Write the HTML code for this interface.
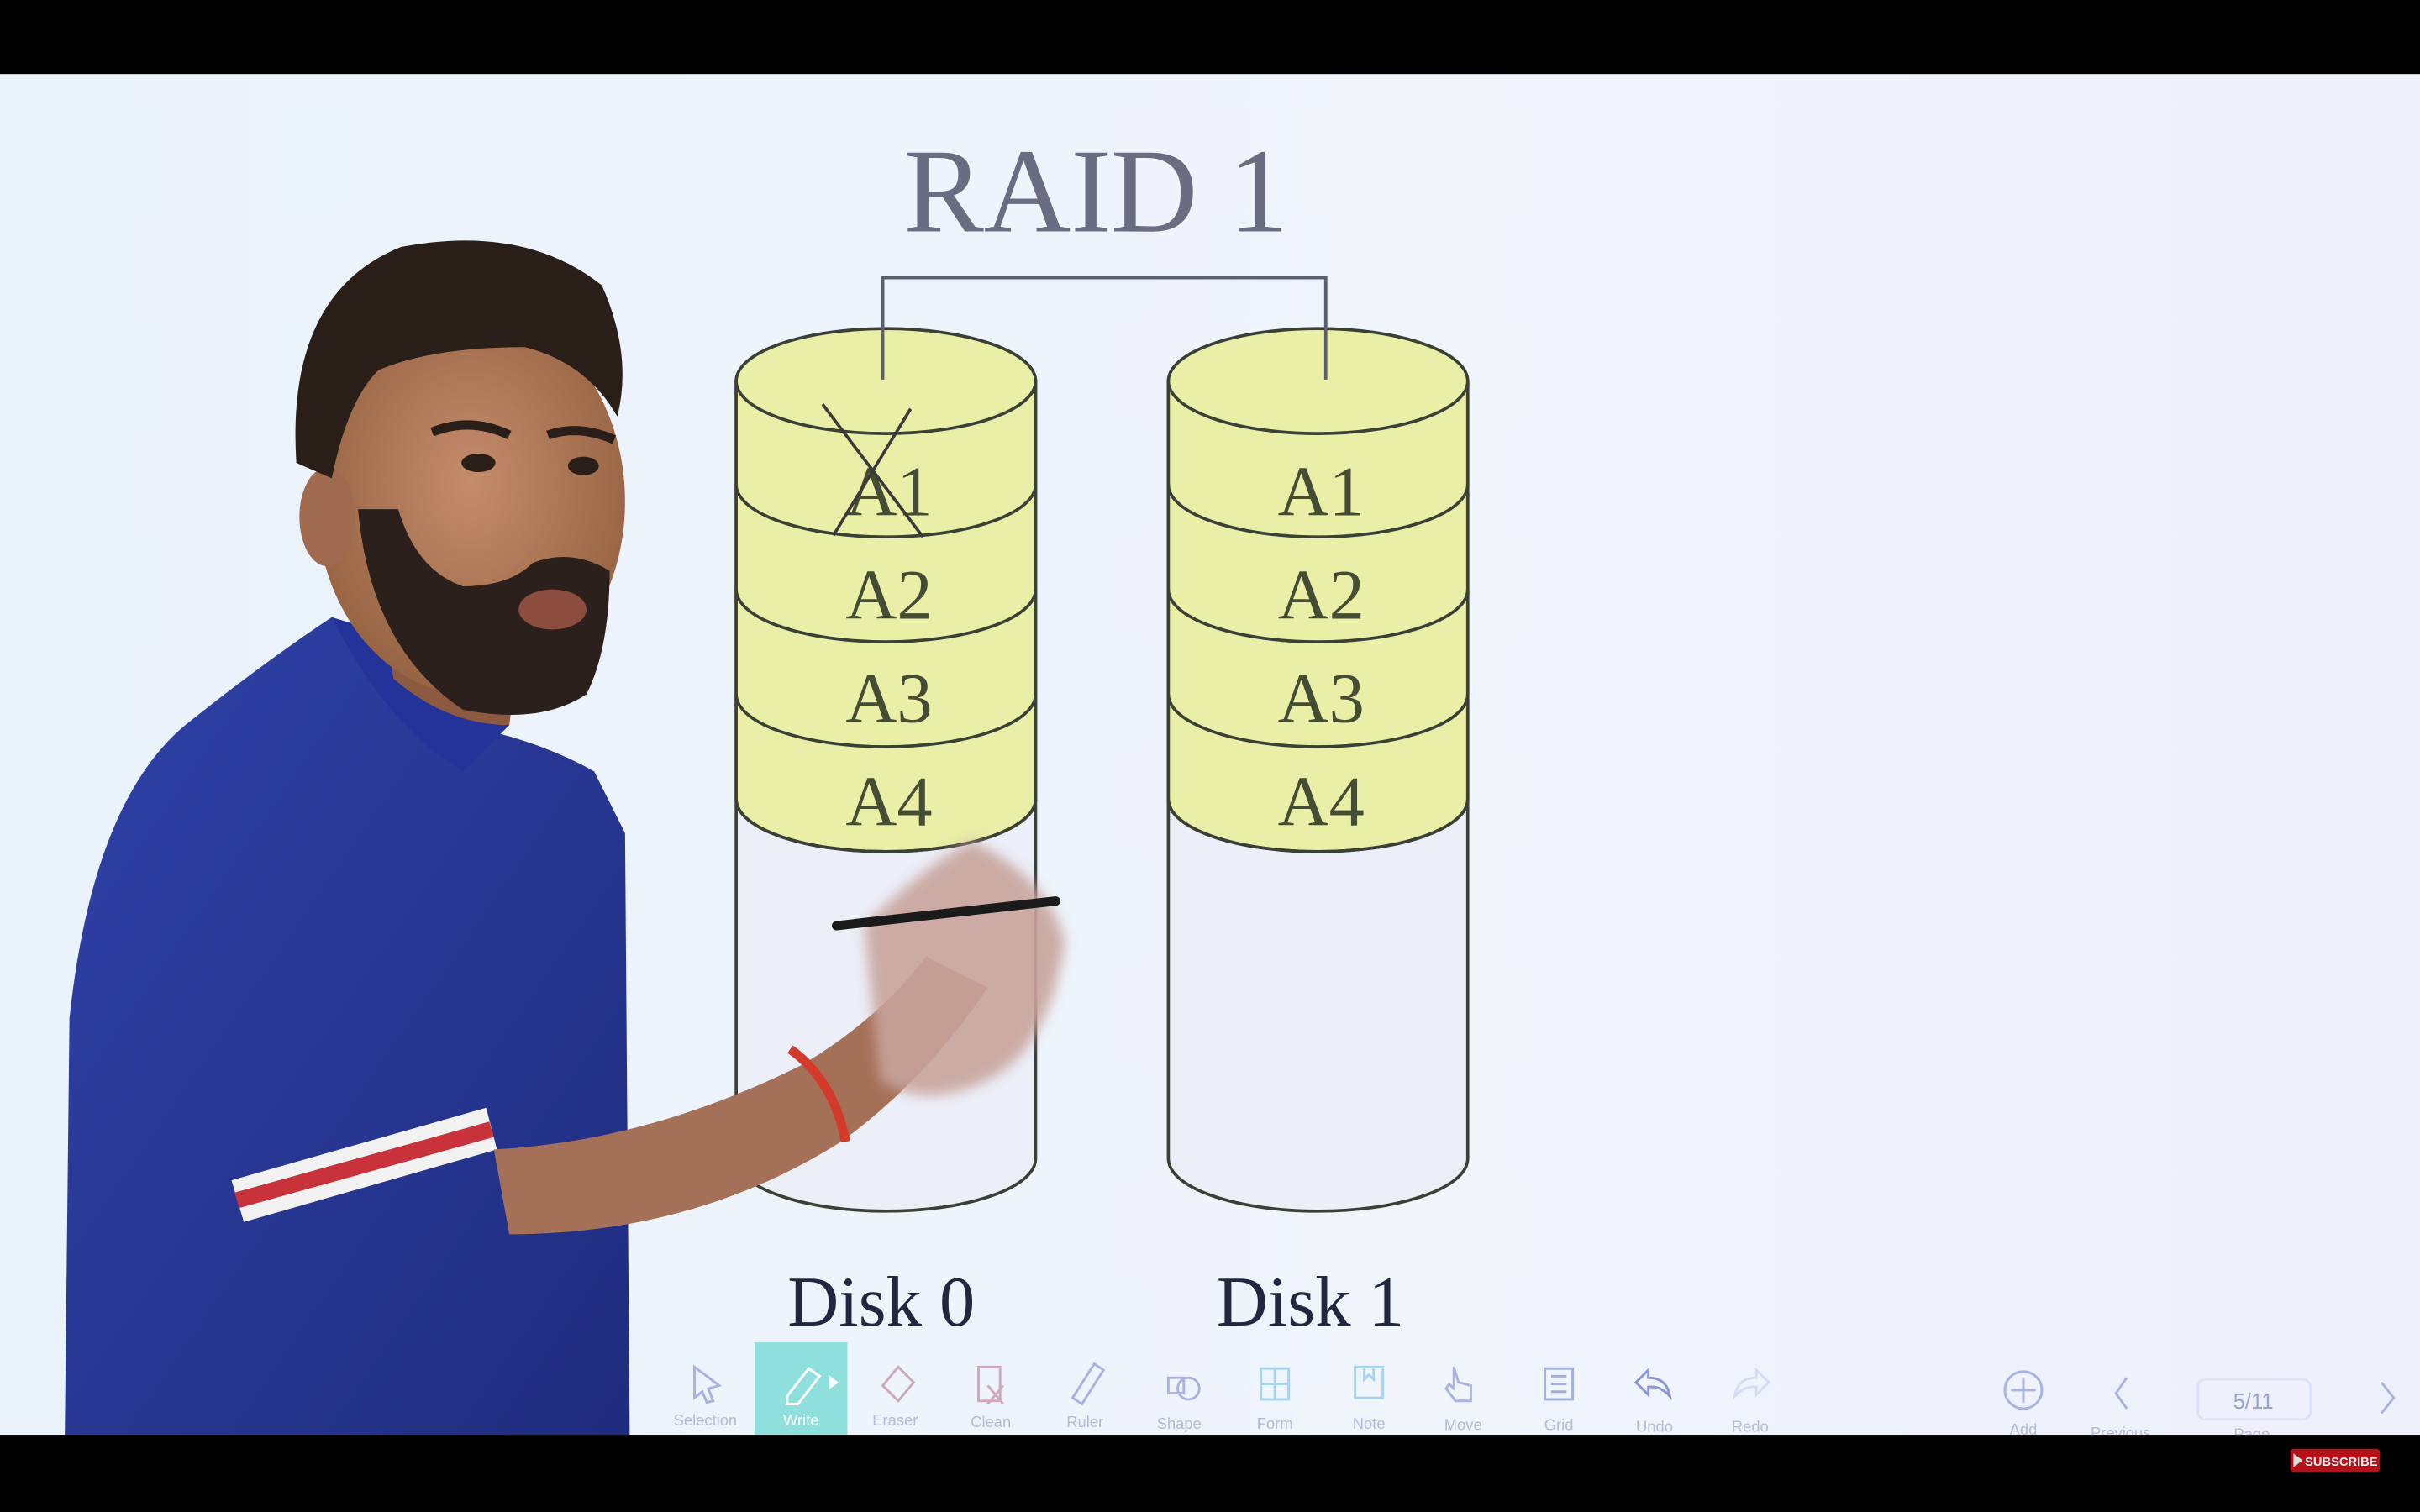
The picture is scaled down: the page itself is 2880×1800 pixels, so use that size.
<!DOCTYPE html>
<html><head><meta charset="utf-8"><style>
html,body{margin:0;padding:0;background:#000;}
svg{display:block}
</style></head><body>
<svg width="2880" height="1800" viewBox="0 0 1568 980" preserveAspectRatio="none" xmlns="http://www.w3.org/2000/svg">
<defs>
<linearGradient id="bg" x1="0" y1="0" x2="1" y2="0">
<stop offset="0" stop-color="#eaf2fb"/><stop offset="0.6" stop-color="#f0f5fc"/><stop offset="1" stop-color="#eef0fb"/>
</linearGradient>
<linearGradient id="shirt" x1="0" y1="0" x2="1" y2="1">
<stop offset="0" stop-color="#2f42a8"/><stop offset="1" stop-color="#1f2c7e"/>
</linearGradient>
<radialGradient id="face" cx="0.5" cy="0.45" r="0.6">
<stop offset="0" stop-color="#c58c6c"/><stop offset="1" stop-color="#93603f"/>
</radialGradient>
<filter id="bl" x="-20%" y="-20%" width="140%" height="140%"><feGaussianBlur stdDeviation="4"/></filter>
</defs>
<rect x="0" y="0" width="1568" height="980" fill="#000"/>
<rect x="0" y="48" width="1568" height="882" fill="url(#bg)"/>

<text x="710" y="150" font-family="Liberation Serif, serif" font-size="78" fill="#6a6d82" text-anchor="middle">RAID 1</text>

<path d="M572,246 V180 H859 V246" fill="none" stroke="#5a5e70" stroke-width="2"/>

<g stroke="#3a4036" stroke-width="2">
<path d="M477,247 V751 A97,34 0 0 0 671,751 V247 Z" fill="#eceff8"/>
<path d="M477,247 V518 A97,34 0 0 0 671,518 V247 Z" fill="#e9efa6"/>
<ellipse cx="574" cy="247" rx="97" ry="34" fill="#e9efa6"/>
<path d="M477,314 A97,34 0 0 0 671,314 M477,382 A97,34 0 0 0 671,382 M477,450 A97,34 0 0 0 671,450 M477,518 A97,34 0 0 0 671,518" fill="none"/>
</g>
<path d="M572,246 V180" stroke="#5a5e70" stroke-width="2"/>
<g font-family="Liberation Serif, serif" font-size="46" fill="#454c34" text-anchor="middle">
<text x="576" y="334">A1</text><text x="576" y="401">A2</text><text x="576" y="468">A3</text><text x="576" y="535">A4</text>
</g>
<path d="M533,262 L598,348 M590,265 L540,347" stroke="#3a3a3a" stroke-width="2" fill="none"/>

<g stroke="#3a4036" stroke-width="2">
<path d="M757,247 V751 A97,34 0 0 0 951,751 V247 Z" fill="#eceff8"/>
<path d="M757,247 V518 A97,34 0 0 0 951,518 V247 Z" fill="#e9efa6"/>
<ellipse cx="854" cy="247" rx="97" ry="34" fill="#e9efa6"/>
<path d="M757,314 A97,34 0 0 0 951,314 M757,382 A97,34 0 0 0 951,382 M757,450 A97,34 0 0 0 951,450 M757,518 A97,34 0 0 0 951,518" fill="none"/>
</g>
<path d="M859,246 V180" stroke="#5a5e70" stroke-width="2"/>
<g font-family="Liberation Serif, serif" font-size="46" fill="#454c34" text-anchor="middle">
<text x="856" y="334">A1</text><text x="856" y="401">A2</text><text x="856" y="468">A3</text><text x="856" y="535">A4</text>
</g>

<g font-family="Liberation Serif, serif" font-size="46" fill="#23263f" text-anchor="middle">
<text x="571" y="859">Disk 0</text><text x="849" y="859">Disk 1</text>
</g>

<!-- Person -->
<path d="M42,930 L45,660 Q60,520 120,470 Q170,430 215,400 Q260,440 300,470 Q350,480 385,500 L405,540 L408,930 Z" fill="url(#shirt)"/>
<path d="M215,400 Q250,470 300,500 L330,470 Q290,440 280,420 Z" fill="#24339a"/>
<path d="M150,765 L315,718 L322,745 L158,792 Z" fill="#f2f2f2"/>
<path d="M152,773 L317,727 L320,737 L155,783 Z" fill="#c8323a"/>
<path d="M320,745 Q420,740 520,690 Q570,660 600,620 L640,640 Q600,700 545,740 Q450,800 330,800 Z" fill="#a57058"/>
<path d="M512,680 Q540,700 548,740" stroke="#d43a2a" stroke-width="6" fill="none"/>
<path d="M560,600 Q600,560 630,545 Q680,570 690,610 Q680,680 640,700 Q600,720 570,700 Z" fill="#c8a49c" opacity="0.9" filter="url(#bl)"/>
<path d="M542,600 L684,584" stroke="#1a1a1a" stroke-width="6" stroke-linecap="round"/>
<path d="M245,380 L340,390 L330,470 Q290,470 255,440 Z" fill="#8c5a40"/>
<ellipse cx="305" cy="325" rx="100" ry="125" fill="url(#face)"/>
<ellipse cx="212" cy="335" rx="18" ry="32" fill="#a06a4e"/>
<path d="M192,300 Q185,190 260,160 Q340,145 390,185 Q410,230 400,270 Q380,235 340,225 Q280,225 245,240 Q225,260 215,310 Z" fill="#2a1e19"/>
<path d="M280,280 Q305,270 330,282 M355,282 Q375,275 398,285" stroke="#2a1e19" stroke-width="6" fill="none"/>
<ellipse cx="310" cy="300" rx="11" ry="6" fill="#2a1e19"/>
<ellipse cx="378" cy="302" rx="10" ry="6" fill="#2a1e19"/>
<path d="M232,330 Q240,420 300,460 Q350,470 380,450 Q395,420 395,370 Q370,355 345,365 Q330,380 300,380 Q270,370 258,330 Z" fill="#2b201c"/>
<ellipse cx="358" cy="395" rx="22" ry="13" fill="#8c4d3e"/>

<!-- Toolbar -->
<rect x="489" y="870" width="60" height="60" fill="#8fe0dc"/>
<g fill="none" stroke="#a9b2e2" stroke-width="1.6">
<path d="M450,886 L466,898 L459,900 L462,908 L458,909 L455,902 L450,906 Z"/>
<path d="M510,905 L524,887 L531,892 L517,910 L510,910 Z" stroke="#fff"/>
<path d="M538,893 L542,896 L538,899 Z" stroke="#fff" fill="#fff"/>
<path d="M572,898 L582,886 L592,896 L582,908 Z" stroke="#c9a8c0"/>
<path d="M634,886 H648 V908 H634 Z M640,898 L650,910 M650,898 L640,910" stroke="#d0a8bc"/>
<path d="M695,906 L709,884 L715,888 L701,910 Z"/>
<path d="M757,893 h10 v10 h-10 Z M770,893 a7,7 0 1 0 0.1,0"/>
<path d="M817,887 h18 v20 h-18 Z M817,897 h18 M826,887 v20" stroke="#a6d4ea"/>
<path d="M878,886 h18 v20 h-18 Z M884,886 v8 l3,-3 l3,3 v-8" stroke="#a6d4ea"/>
<path d="M942,886 v14 l-3,-3 l-2,3 l6,8 h10 v-10 l-8,-2 Z"/>
<path d="M1001,887 h18 v20 h-18 Z M1005,892 h10 M1005,897 h10 M1005,902 h10" stroke="#9fb0e0"/>
<path d="M1060,896 L1068,888 V893 Q1080,893 1082,905 Q1076,898 1068,899 V904 Z" stroke="#8c96d6"/>
<path d="M1146,896 L1138,888 V893 Q1126,893 1124,905 Q1130,898 1138,899 V904 Z" stroke="#d6dcf2"/>
<circle cx="1311" cy="901" r="12"/><path d="M1311,893 v16 M1303,901 h16"/>
<path d="M1378,893 L1371,903 L1378,913"/>
<rect x="1424" y="894" width="73" height="26" rx="5" stroke="#dde2f6"/>
<path d="M1543,896 L1551,906 L1543,916"/>
</g>
<text x="1460" y="913" font-family="Liberation Sans, sans-serif" font-size="14" fill="#9aa2d0" text-anchor="middle">5/11</text>
<g font-family="Liberation Sans, sans-serif" font-size="10" fill="#b5bbd8" text-anchor="middle">
<text x="457" y="924">Selection</text><text x="519" y="924" fill="#fff">Write</text><text x="580" y="924">Eraser</text>
<text x="642" y="925">Clean</text><text x="703" y="925">Ruler</text><text x="764" y="926">Shape</text>
<text x="826" y="926">Form</text><text x="887" y="926">Note</text><text x="948" y="927">Move</text>
<text x="1010" y="927">Grid</text><text x="1072" y="928">Undo</text><text x="1134" y="928">Redo</text>
<text x="1311" y="930">Add</text><text x="1374" y="932">Previous</text><text x="1459" y="933">Page</text>
</g>
<rect x="0" y="930" width="1568" height="50" fill="#000"/>
<rect x="1484" y="939" width="58" height="15" rx="2" fill="#b8101a"/>
<path d="M1486,942 L1492,946.5 L1486,951 Z" fill="#ddd"/>
<text x="1517" y="950" font-family="Liberation Sans, sans-serif" font-size="8" font-weight="bold" fill="#eee" text-anchor="middle">SUBSCRIBE</text>
</svg>
</body></html>
